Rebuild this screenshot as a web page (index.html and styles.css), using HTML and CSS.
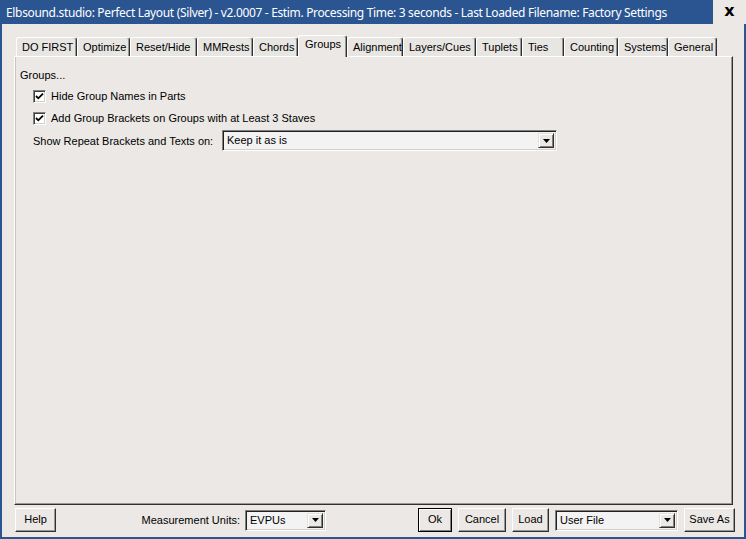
FILE: index.html
```html
<!DOCTYPE html>
<html>
<head>
<meta charset="utf-8">
<link rel="stylesheet" href="styles.css">
</head>
<body>
<div class="titlebar">
  <span class="title">Elbsound.studio: Perfect Layout (Silver) - v2.0007 - Estim. Processing Time: 3 seconds - Last Loaded Filename: Factory Settings</span>
  <div class="close">x</div>
</div>
<div class="frame">
  <div class="tabs">
    <div class="tab w61">DO FIRST</div>
    <div class="tab w53">Optimize</div>
    <div class="tab w67">Reset/Hide</div>
    <div class="tab w56">MMRests</div>
    <div class="tab w45">Chords</div>
    <div class="tab w49 active">Groups</div>
    <div class="tab w56">Alignment</div>
    <div class="tab w73">Layers/Cues</div>
    <div class="tab w46">Tuplets</div>
    <div class="tab w42">Ties</div>
    <div class="tab w54">Counting</div>
    <div class="tab w50">Systems</div>
    <div class="tab w49">General</div>
  </div>
  <div class="panel">
    <div class="heading">Groups...</div>
    <div class="row check first">
      <span class="box"><svg width="9" height="9" viewBox="0 0 9 9"><polyline points="1,4 3.3,6.3 8,1.6" fill="none" stroke="#000" stroke-width="1.8"/></svg></span>
      <span class="label">Hide Group Names in Parts</span>
    </div>
    <div class="row check second">
      <span class="box"><svg width="9" height="9" viewBox="0 0 9 9"><polyline points="1,4 3.3,6.3 8,1.6" fill="none" stroke="#000" stroke-width="1.8"/></svg></span>
      <span class="label">Add Group Brackets on Groups with at Least 3 Staves</span>
    </div>
    <div class="row select-row">
      <span class="field-label">Show Repeat Brackets and Texts on:</span>
      <div class="combo wide">
        <span class="value">Keep it as is</span>
        <span class="drop"><svg width="7" height="4" viewBox="0 0 7 4"><polygon points="0,0 7,0 3.5,4" fill="#000"/></svg></span>
      </div>
    </div>
  </div>
  <div class="footer">
    <div class="btn help">Help</div>
    <div class="units-label"><span>Measurement Units:</span></div>
    <div class="combo units">
      <span class="value">EVPUs</span>
      <span class="drop"><svg width="7" height="4" viewBox="0 0 7 4"><polygon points="0,0 7,0 3.5,4" fill="#000"/></svg></span>
    </div>
    <div class="btn ok">Ok</div>
    <div class="btn cancel">Cancel</div>
    <div class="btn load">Load</div>
    <div class="combo userfile">
      <span class="value">User File</span>
      <span class="drop"><svg width="7" height="4" viewBox="0 0 7 4"><polygon points="0,0 7,0 3.5,4" fill="#000"/></svg></span>
    </div>
    <div class="btn saveas">Save As</div>
  </div>
</div>
</body>
</html>
```

FILE: styles.css
```css
html, body {
  margin: 0;
  padding: 0;
}
body {
  width: 746px;
  height: 539px;
  overflow: hidden;
  background: #ebe8e5;
  font-family: "Liberation Sans", Arial, sans-serif;
  font-size: 11px;
  color: #000;
}
.titlebar {
  height: 24px;
  background: #2b5591;
  display: flex;
  align-items: center;
  justify-content: space-between;
}
.title {
  color: #fff;
  font-family: "Noto Sans", "Open Sans", sans-serif;
  font-size: 12px;
  padding-left: 6px;
  white-space: nowrap;
  letter-spacing: -0.34px;
}
.close {
  width: 33px;
  height: 24px;
  background: #ebe8e5;
  font-family: "DejaVu Sans", sans-serif;
  font-weight: bold;
  font-size: 16px;
  line-height: 22px;
  text-align: center;
}
.frame {
  box-sizing: border-box;
  height: 515px;
  border-left: 2px solid #2b5591;
  border-right: 2px solid #2b5591;
  border-bottom: 2px solid #2b5591;
  padding-top: 11px;
}
.tabs {
  display: flex;
  align-items: flex-end;
  height: 21px;
  padding-left: 14px;
  position: relative;
  z-index: 1;
}
.tab {
  box-sizing: border-box;
  height: 19px;
  border-top: 1px solid #fff;
  border-left: 1px solid #fff;
  border-right: 1px solid #303030;
  box-shadow: inset -1px 0 #9a9894;
  border-radius: 3px 3px 0 0;
  background: #e8e6e3;
  padding-left: 5px;
  line-height: 18px;
  white-space: nowrap;
}
.tab.active {
  height: 22px;
  margin-bottom: -1px;
  background: #ebe8e5;
  line-height: 17px;
  padding-left: 6px;
}
.w61 { width: 61px; }
.w53 { width: 53px; }
.w67 { width: 67px; }
.w56 { width: 56px; }
.w45 { width: 45px; }
.w49 { width: 49px; }
.w73 { width: 73px; }
.w46 { width: 46px; }
.w42 { width: 42px; }
.w54 { width: 54px; }
.w50 { width: 50px; }
.panel {
  box-sizing: border-box;
  margin-left: 12px;
  width: 719px;
  height: 449px;
  border-top: 1px solid #fff;
  border-left: 1px solid #fff;
  border-right: 1px solid #303030;
  border-bottom: 1px solid #303030;
  box-shadow: inset -1px -1px #9a9894, inset 1px 0 #c9c6c2;
  padding-left: 5px;
}
.heading {
  padding-top: 11px;
  line-height: 14px;
  height: 14px;
}
.row {
  display: flex;
  align-items: center;
  padding-left: 13px;
}
.check {
  height: 13px;
}
.check.first { margin-top: 8px; }
.check.second { margin-top: 9px; }
.box {
  box-sizing: border-box;
  width: 13px;
  height: 13px;
  background: #fff;
  border-top: 1px solid #808080;
  border-left: 1px solid #808080;
  border-right: 1px solid #fff;
  border-bottom: 1px solid #fff;
  box-shadow: inset 1px 1px #404040, inset -1px -1px #d4d0c8;
  display: flex;
  align-items: center;
  justify-content: center;
}
.box svg { display: block; }
.label {
  margin-left: 5px;
  line-height: 13px;
}
.select-row {
  margin-top: 5px;
  height: 21px;
}
.field-label {
  width: 189px;
}
.combo {
  box-sizing: border-box;
  height: 21px;
  background: #f3f3f3;
  border-top: 1px solid #808080;
  border-left: 1px solid #808080;
  border-right: 1px solid #fff;
  border-bottom: 1px solid #fff;
  box-shadow: inset 1px 1px #202020, inset -1px -1px #d4d0c8;
  display: flex;
  align-items: center;
  justify-content: space-between;
  padding: 2px;
}
.combo .value {
  padding-left: 2px;
  line-height: 15px;
}
.drop {
  box-sizing: border-box;
  width: 16px;
  height: 15px;
  background: #ebe8e5;
  border-top: 1px solid #e3e1de;
  border-left: 1px solid #e3e1de;
  border-right: 1px solid #303030;
  border-bottom: 1px solid #303030;
  box-shadow: inset 1px 1px #fff, inset -1px -1px #808080;
  display: flex;
  align-items: center;
  justify-content: center;
}
.drop svg { display: block; }
.combo.wide { width: 335px; }
.footer {
  display: flex;
  align-items: center;
  margin-top: 3px;
  height: 24px;
}
.btn {
  box-sizing: border-box;
  height: 24px;
  background: #ebe8e5;
  border-top: 1px solid #fff;
  border-left: 1px solid #fff;
  border-right: 1px solid #303030;
  border-bottom: 1px solid #303030;
  box-shadow: inset -1px -1px #9a9894;
  text-align: center;
  line-height: 21px;
}
.help { margin-left: 13px; width: 41px; }
.units-label {
  margin-left: 91px;
  width: 93px;
  display: flex;
  justify-content: flex-end;
  white-space: nowrap;
}
.combo.units { margin-left: 5px; width: 81px; }
.ok {
  margin-left: 92px;
  width: 34px;
  border: 1px solid #000;
  box-shadow: inset 1px 1px #fff, inset -1px -1px #808080;
}
.cancel { margin-left: 6px; width: 48px; }
.load { margin-left: 6px; width: 37px; }
.combo.userfile { margin-left: 6px; width: 123px; }
.saveas { margin-left: 6px; width: 51px; }
```
